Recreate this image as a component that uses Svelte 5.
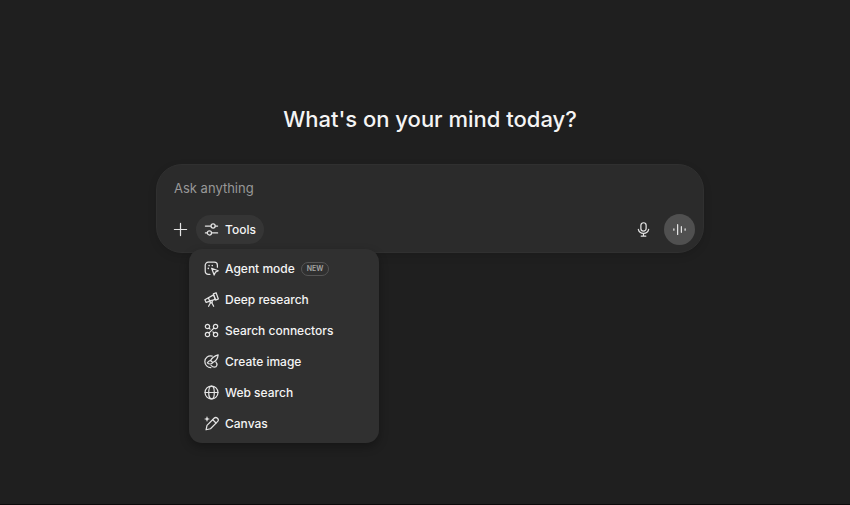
<script lang="ts">
  type Tool = { id: string; label: string; badge?: string }

  const tools: Tool[] = [
    { id: 'agent', label: 'Agent mode', badge: 'NEW' },
    { id: 'research', label: 'Deep research' },
    { id: 'connectors', label: 'Search connectors' },
    { id: 'image', label: 'Create image' },
    { id: 'web', label: 'Web search' },
    { id: 'canvas', label: 'Canvas' },
  ]

  let prompt = $state('')
  let open = $state(true)
</script>

<main class="page">
  <h1>What's on your mind today?</h1>

  <form class="composer" onsubmit={(e) => e.preventDefault()}>
    <input type="text" bind:value={prompt} placeholder="Ask anything" aria-label="Ask anything" />

    <div class="actions">
      <button type="button" class="round" aria-label="Add files">
        <svg viewBox="0 0 16 16"><path d="M8 1.5v13M1.5 8h13" /></svg>
      </button>

      <div class="tools">
        <button type="button" class="pill" aria-expanded={open} onclick={() => (open = !open)}>
          <svg viewBox="0 0 16 16">
            <path d="M1.5 4.3h6M12 4.3h2.5M1.5 11.7h2M8 11.7h6.5" />
            <circle cx="9.7" cy="4.3" r="2.2" />
            <circle cx="5.8" cy="11.7" r="2.2" />
          </svg>
          Tools
        </button>

        {#if open}
          <div class="menu" role="menu">
            {#each tools as tool (tool.id)}
              <button type="button" role="menuitem">
                <svg viewBox="0 0 16 16">
                  {#if tool.id === 'agent'}
                    <path d="M6.3 14.3H4.6A3.3 3.3 0 0 1 1.3 11V4.6A3.3 3.3 0 0 1 4.6 1.3h6.4A3.3 3.3 0 0 1 14.3 4.6v2" />
                    <path d="M8.2 7.7l7 2.7-3 1.5-1.4 3.1z" />
                    <path class="dots" d="M5.4 4.9h.01M8.8 4.9h.01M4.6 7.9h.01" />
                  {:else if tool.id === 'research'}
                    <path d="M.9 8.300l9.3-5.200 1.700 4.700-9.600 3.300z" />
                    <path d="M10 2l2.9-1.2 2.4 6.600-2.900 1.200zM4.800 6.400l1.200 3.200" />
                    <circle cx="7.6" cy="10.3" r="1.3" />
                    <path d="M6.9 11.4l-2 3.800M8.300 11.400l2 3.800" />
                  {:else if tool.id === 'connectors'}
                    <circle cx="3.7" cy="3.7" r="2.3" />
                    <circle cx="12.3" cy="3.7" r="2.3" />
                    <circle cx="3.7" cy="12.3" r="2.3" />
                    <circle cx="12.3" cy="12.3" r="2.3" />
                    <path d="M10.6 5.4L5.4 10.6M5.4 5.4l1.1 1.1M9.5 9.5l1.1 1.1" />
                  {:else if tool.id === 'image'}
                    <path d="M8.8 2.2C4.8 1 .9 3.8.9 8c0 3.8 3 6.6 6.4 6.6" />
                    <path d="M15.1.9C11.300 2 8.200 4.300 7 7l2.300 2.100C12.400 7.700 14.700 4.600 15.100.9z" />
                    <path d="M7 7c-2-.4-2.300 1.600-3.500 2.500 2 1.800 5 1.400 5.800-.4" />
                    <path d="M12.600 8.400c2.200 2.500 1.300 5.700-1.500 5.700-1.500 0-2.600-.8-3.600-1.900" />
                  {:else if tool.id === 'web'}
                    <circle cx="8" cy="8" r="6.9" />
                    <ellipse cx="8" cy="8" rx="3" ry="6.9" />
                    <path d="M1.1 8h13.8" />
                  {:else}
                    <path d="M2.2 14.7l1-4.7 7.500-7.600a2.550 2.550 0 0 1 3.700 3.600l-7.500 7.600z" />
                    <path d="M9.3 4l3.5 3.5" />
                    <path class="spark" d="M3.2 0l.9 2.300 2.300.9-2.300.9-.9 2.300-.9-2.300L0 3.200l2.300-.9z" />
                  {/if}
                </svg>
                <span>{tool.label}</span>
                {#if tool.badge}<span class="badge">{tool.badge}</span>{/if}
              </button>
            {/each}
          </div>
        {/if}
      </div>

      <button type="button" class="round mic" aria-label="Dictate">
        <svg viewBox="0 0 16 16">
          <rect x="5.2" y=".8" width="5.6" height="9" rx="2.8" />
          <path d="M2.5 7.8a5.6 5.2 0 0 0 11 0M8 12.4v2.400M5.500 15h5" />
        </svg>
      </button>
      <button type="button" class="round voice" aria-label="Use voice mode">
        <svg viewBox="0 0 16 16"><path d="M2 7.3v1.4M6 2.8v10.4M10 5v6M14 7.3v1.4" /></svg>
      </button>
    </div>
  </form>
</main>

<style>
  :global(body) {
    margin: 0;
    background: #1f1f1f;
  }

  .page {
    box-sizing: border-box;
    min-height: 100vh;
    padding: 104px 146px 40px 156px;
    border-bottom: 1px solid #0c0a0b;
    color: #f4f4f4;
    font-family: Inter, 'Liberation Sans', sans-serif;
  }

  h1 {
    margin: 0 0 30px;
    font-size: 22px;
    font-weight: 500;
    line-height: 30px;
    text-align: center;
  }

  .composer {
    padding: 9px 8px 7px;
    border: 1px solid #303030;
    border-radius: 26px;
    background: #2b2b2b;
    box-shadow: 0 3px 8px rgba(0, 0, 0, 0.12);
  }

  input {
    display: block;
    box-sizing: border-box;
    width: 100%;
    height: 28px;
    padding: 0 9px;
    border: 0;
    outline: 0;
    background: none;
    color: inherit;
    font: 400 13px/20px Inter, 'Liberation Sans', sans-serif;
  }

  input::placeholder {
    color: #989898;
    opacity: 1;
  }

  button {
    display: flex;
    align-items: center;
    margin: 0;
    border: 0;
    background: none;
    color: inherit;
    font: 500 12px/16px Inter, 'Liberation Sans', sans-serif;
    cursor: pointer;
  }

  svg {
    flex: none;
    width: 15px;
    height: 15px;
    fill: none;
    stroke: #e4e4e4;
    stroke-width: 1.3;
    stroke-linecap: round;
    stroke-linejoin: round;
  }

  .actions {
    display: flex;
    align-items: center;
    margin-top: 12px;
  }

  .round {
    justify-content: center;
    width: 31px;
    height: 31px;
    padding: 0;
    border-radius: 50%;
  }

  .tools {
    position: relative;
  }

  .pill {
    gap: 6px;
    height: 29px;
    padding: 0 8px;
    border-radius: 15px;
    background: #353535;
  }

  .mic {
    margin-left: auto;
    margin-right: 5px;
  }

  .voice {
    background: #505050;
  }

  .menu {
    position: absolute;
    z-index: 1;
    top: calc(100% + 5px);
    left: -7px;
    box-sizing: border-box;
    width: 190px;
    padding: 4px;
    border-radius: 13px;
    background: #303030;
    box-shadow: 0 4px 10px rgba(0, 0, 0, 0.3);
  }

  .menu button {
    gap: 6px;
    width: 100%;
    height: 31px;
    padding: 0 11px;
    border-radius: 8px;
    white-space: nowrap;
  }

  .menu button:hover {
    background: #3a3a3a;
  }

  .badge {
    padding: 0 5px;
    border: 1px solid #555;
    border-radius: 8px;
    color: #a5a5a5;
    font-size: 7px;
    font-weight: 600;
    line-height: 12px;
  }

  .dots {
    stroke-width: 1.7;
  }

  .spark {
    fill: #e4e4e4;
    stroke: none;
  }
</style>
